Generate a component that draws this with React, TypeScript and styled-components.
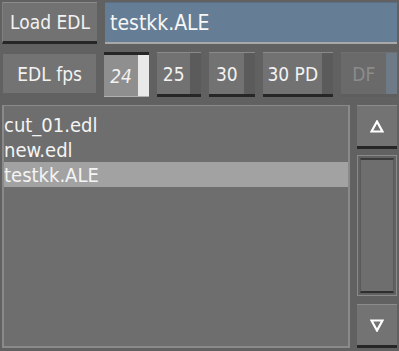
import React from 'react';
import styled, { createGlobalStyle, css } from 'styled-components';

const GlobalStyle = createGlobalStyle`
  html, body {
    margin: 0;
    padding: 0;
    background: #616161;
  }
`;

const Panel = styled.div`
  width: 399px;
  height: 351px;
  box-sizing: border-box;
  padding: 2px 2px 3px 2px;
  display: flex;
  flex-direction: column;
  gap: 8px;
  font-family: 'DejaVu Sans Condensed', 'DejaVu Sans', 'Liberation Sans', sans-serif;
  font-stretch: condensed;
  color: #f2f2f2;
  background: #616161;
`;

const Row = styled.div`
  display: flex;
  gap: 8px;
  align-items: stretch;
`;

const LoadButton = styled.button`
  width: 95px;
  height: 42px;
  box-sizing: border-box;
  background: #727272;
  border: none;
  border-top: 1px solid #8c8c8c;
  border-left: 1px solid #808080;
  border-bottom: 3px solid #262626;
  color: #f2f2f2;
  font-family: inherit;
  font-stretch: condensed;
  font-size: 19px;
  padding: 0;
`;

const NameField = styled.div`
  flex: 1;
  height: 42px;
  box-sizing: border-box;
  background: #667e95;
  border-top: 1px solid #5a6f84;
  border-bottom: 2px solid #a8a8a8;
  display: flex;
  align-items: center;
  padding-left: 5px;
  font-size: 21px;
  color: #f6f6f6;
`;

const FpsLabel = styled.div`
  width: 94px;
  height: 39px;
  margin: 2px 0 0 1px;
  background: #737373;
  display: flex;
  align-items: center;
  justify-content: center;
  font-size: 19px;
`;

const FpsButton = styled.div<{ $w: number; $active?: boolean; $disabled?: boolean }>`
  width: ${({ $w }) => $w}px;
  height: 45px;
  box-sizing: border-box;
  display: flex;
  background: #727272;
  border-top: 1px solid #8a8a8a;
  border-bottom: 3px solid #262626;
  font-size: 19px;
  color: #f2f2f2;

  ${({ $active }) =>
    $active &&
    css`
      background: #8f8f8f;
      border-top: 3px solid #262626;
      border-bottom: 1px solid #b0b0b0;
      font-style: italic;
    `}

  ${({ $disabled }) =>
    $disabled &&
    css`
      background: #6a6a6a;
      border-top: 1px solid #707070;
      border-bottom: 3px solid #5e5e5e;
      color: #8c8c8c;
    `}
`;

const FpsText = styled.span`
  flex: 1;
  display: flex;
  align-items: center;
  justify-content: center;
`;

const Indicator = styled.span<{ $active?: boolean; $disabled?: boolean }>`
  width: 11px;
  background: ${({ $active, $disabled }) =>
    $active ? '#e9e9e9' : $disabled ? '#6f7a87' : '#5b5b5b'};
`;

const ListRow = styled.div`
  flex: 1;
  display: flex;
  gap: 7px;
  min-height: 0;
`;

const FileList = styled.div`
  width: 348px;
  box-sizing: border-box;
  background: #6e6e6e;
  border: 2px solid #8a8a8a;
  border-top-width: 1px;
  padding-top: 6px;
  display: flex;
  flex-direction: column;
`;

const FileItem = styled.div<{ $selected?: boolean }>`
  height: 25px;
  display: flex;
  align-items: center;
  padding-left: 0;
  font-size: 20px;
  color: #f4f4f4;
  background: ${({ $selected }) => ($selected ? '#a2a2a2' : 'transparent')};
`;

const ScrollColumn = styled.div`
  width: 40px;
  display: flex;
  flex-direction: column;
  gap: 6px;
`;

const ArrowButton = styled.div`
  height: 44px;
  box-sizing: border-box;
  background: #737373;
  border-top: 1px solid #8c8c8c;
  border-bottom: 3px solid #262626;
  display: flex;
  align-items: center;
  justify-content: center;
`;

const Track = styled.div`
  flex: 1;
  box-sizing: border-box;
  border: 1px solid #8a8a8a;
  padding: 2px;
  display: flex;
  margin-bottom: 2px;
`;

const Thumb = styled.div`
  flex: 1;
  background: #6e6e6e;
  border-top: 2px solid #3a3a3a;
  border-bottom: 2px solid #2e2e2e;
  border-left: 1px solid #5a5a5a;
  border-right: 1px solid #5a5a5a;
`;

const Arrow: React.FC<{ down?: boolean }> = ({ down }) => (
  <svg width="14" height="13" viewBox="0 0 14 13">
    <polygon
      points={down ? '1.5,1.5 12.5,1.5 7,11.5' : '7,1.5 12.5,11.5 1.5,11.5'}
      fill="none"
      stroke="#ffffff"
      strokeWidth="2.2"
    />
  </svg>
);

const rates = [
  { label: '24', w: 45, active: true },
  { label: '25', w: 45 },
  { label: '30', w: 46 },
  { label: '30 PD', w: 71 },
  { label: 'DF', w: 56, disabled: true },
];

const files = ['cut_01.edl', 'new.edl', 'testkk.ALE'];

export default function App() {
  return (
    <>
      <GlobalStyle />
      <Panel>
        <Row>
          <LoadButton>Load EDL</LoadButton>
          <NameField>testkk.ALE</NameField>
        </Row>
        <Row>
          <FpsLabel>EDL fps</FpsLabel>
          {rates.map((r) => (
            <FpsButton key={r.label} $w={r.w} $active={r.active} $disabled={r.disabled}>
              <FpsText>{r.label}</FpsText>
              <Indicator $active={r.active} $disabled={r.disabled} />
            </FpsButton>
          ))}
        </Row>
        <ListRow>
          <FileList>
            {files.map((f) => (
              <FileItem key={f} $selected={f === 'testkk.ALE'}>
                {f}
              </FileItem>
            ))}
          </FileList>
          <ScrollColumn>
            <ArrowButton>
              <Arrow />
            </ArrowButton>
            <Track>
              <Thumb />
            </Track>
            <ArrowButton>
              <Arrow down />
            </ArrowButton>
          </ScrollColumn>
        </ListRow>
      </Panel>
    </>
  );
}
